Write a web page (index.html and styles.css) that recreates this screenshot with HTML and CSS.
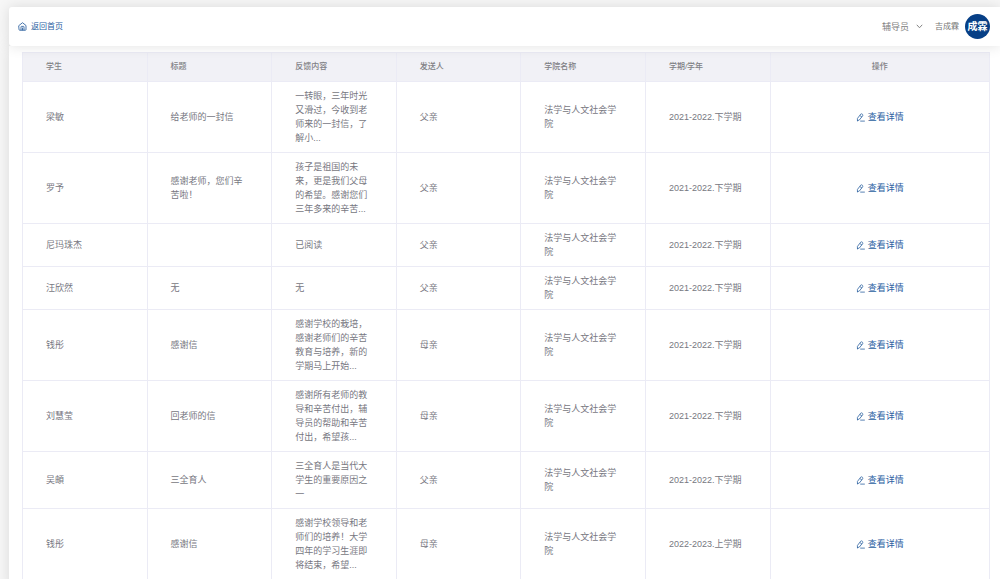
FILE: index.html
```html
<!DOCTYPE html>
<html lang="zh-CN">
<head>
<meta charset="utf-8">
<meta name="viewport" content="width=device-width, initial-scale=1">
<title>家长反馈</title>
<link rel="stylesheet" href="styles.css">
</head>
<body>
<svg class="sprite" aria-hidden="true">
  <symbol id="edit" viewBox="0 0 16 16"><path d="M2.6 13.8 2.5 9.8 8.4 2Q9.8 .9 11.1 2L11.7 2.6Q12.6 3.9 11.7 5.2L6 12.4 2.6 13.8M10 6.8 7.6 5M8.2 14.4H15"/></symbol>
</svg>
<div class="page">
  <header class="topbar">
    <a class="home" href="#">
      <svg class="home-icon" viewBox="0 0 18 18" aria-hidden="true"><path d="M2 7 9 1.4 16 7v8.4q0 1-1 1H3q-1 0-1-1zM6 16V9.8q0-1 1-1h4q1 0 1 1V16M9 12v4"/></svg>
      <span>返回首页</span>
    </a>
    <div class="account">
      <button class="role" type="button">辅导员
        <svg class="chevron" viewBox="0 0 10 10" aria-hidden="true"><path d="M1.5 3 5 6.8 8.5 3"/></svg>
      </button>
      <span class="user">吉成霖</span>
      <span class="avatar">成霖</span>
    </div>
  </header>
  <main class="content">
    <table class="feedback">
      <thead>
        <tr><th>学生</th><th>标题</th><th>反馈内容</th><th>发送人</th><th>学院名称</th><th>学期/学年</th><th class="action">操作</th></tr>
      </thead>
      <tbody>
        <tr><td>梁敏</td><td>给老师的一封信</td><td>一转眼，三年时光又滑过，今收到老师来的一封信，了解小...</td><td>父亲</td><td>法学与人文社会学院</td><td>2021-2022.下学期</td><td class="action"><a class="detail" href="#"><svg class="edit" aria-hidden="true"><use href="#edit"/></svg>查看详情</a></td></tr>
        <tr><td>罗予</td><td>感谢老师，您们辛苦啦！</td><td>孩子是祖国的未来，更是我们父母的希望。感谢您们三年多来的辛苦...</td><td>父亲</td><td>法学与人文社会学院</td><td>2021-2022.下学期</td><td class="action"><a class="detail" href="#"><svg class="edit" aria-hidden="true"><use href="#edit"/></svg>查看详情</a></td></tr>
        <tr><td>尼玛珠杰</td><td></td><td>已阅读</td><td>父亲</td><td>法学与人文社会学院</td><td>2021-2022.下学期</td><td class="action"><a class="detail" href="#"><svg class="edit" aria-hidden="true"><use href="#edit"/></svg>查看详情</a></td></tr>
        <tr><td>汪欣然</td><td>无</td><td>无</td><td>父亲</td><td>法学与人文社会学院</td><td>2021-2022.下学期</td><td class="action"><a class="detail" href="#"><svg class="edit" aria-hidden="true"><use href="#edit"/></svg>查看详情</a></td></tr>
        <tr><td>钱彤</td><td>感谢信</td><td>感谢学校的栽培，感谢老师们的辛苦教育与培养，新的学期马上开始...</td><td>母亲</td><td>法学与人文社会学院</td><td>2021-2022.下学期</td><td class="action"><a class="detail" href="#"><svg class="edit" aria-hidden="true"><use href="#edit"/></svg>查看详情</a></td></tr>
        <tr><td>刘慧莹</td><td>回老师的信</td><td>感谢所有老师的教导和辛苦付出，辅导员的帮助和辛苦付出，希望孩...</td><td>母亲</td><td>法学与人文社会学院</td><td>2021-2022.下学期</td><td class="action"><a class="detail" href="#"><svg class="edit" aria-hidden="true"><use href="#edit"/></svg>查看详情</a></td></tr>
        <tr><td>吴頔</td><td>三全育人</td><td>三全育人是当代大学生的重要原因之一</td><td>父亲</td><td>法学与人文社会学院</td><td>2021-2022.下学期</td><td class="action"><a class="detail" href="#"><svg class="edit" aria-hidden="true"><use href="#edit"/></svg>查看详情</a></td></tr>
        <tr><td>钱彤</td><td>感谢信</td><td>感谢学校领导和老师们的培养！大学四年的学习生涯即将结束，希望...</td><td>母亲</td><td>法学与人文社会学院</td><td>2022-2023.上学期</td><td class="action"><a class="detail" href="#"><svg class="edit" aria-hidden="true"><use href="#edit"/></svg>查看详情</a></td></tr>
      </tbody>
    </table>
  </main>
</div>
</body>
</html>
```
FILE: styles.css
```css
* { box-sizing: border-box; }
html { height: 100%; }
body {
  margin: 0;
  height: 100%;
  overflow: hidden;
  background: #f7f7f7;
  color: #777781;
  font: 9px/14px "Liberation Sans", "Noto Sans CJK SC", sans-serif;
}
a { color: #2a609f; text-decoration: none; }
svg { fill: none; stroke: currentColor; stroke-linecap: round; stroke-linejoin: round; }
.sprite { display: none; }
.page { padding: 7px 0 0 9px; }
.topbar {
  position: relative;
  display: flex;
  align-items: center;
  justify-content: space-between;
  padding: 7px 10px 7px 9px;
  background: #fff;
  border-radius: 3px 0 0 3px;
  box-shadow: 0 0 14px rgba(0, 0, 0, 0.12);
}
.home { display: flex; align-items: center; gap: 4px; font-size: 8px; }
.home-icon { width: 9px; height: 9px; stroke-width: 1.7; }
.account { display: flex; align-items: center; }
.role {
  display: flex;
  align-items: center;
  gap: 7px;
  margin-right: 12px;
  padding: 0;
  border: 0;
  background: none;
  color: #808080;
  font: inherit;
}
.chevron { width: 7px; height: 7px; stroke-width: 1.4; }
.user { margin-right: 6px; color: #777; font-size: 8px; }
.avatar {
  width: 25px;
  border-radius: 50%;
  background: #063f86;
  color: #fff;
  font-size: 10px;
  font-weight: 700;
  line-height: 25px;
  text-align: center;
}
.content {
  padding: 6px 10px 10px 13px;
  background: #fff;
  box-shadow: 0 0 14px rgba(0, 0, 0, 0.12);
}
.feedback {
  width: 100%;
  border-collapse: collapse;
  table-layout: fixed;
}
.feedback th, .feedback td {
  padding: 7px 23px;
  border: 1px solid #ebebf5;
  text-align: left;
  vertical-align: middle;
  overflow-wrap: anywhere;
}
.feedback th {
  background: #f1f1f6;
  color: #808085;
  font-size: 8px;
  font-weight: 500;
}
.feedback .action { width: 22.7%; text-align: center; }
.detail { display: inline-flex; align-items: center; gap: 3px; vertical-align: top; }
.edit { width: 9px; height: 9px; stroke-width: 1.4; }
```
